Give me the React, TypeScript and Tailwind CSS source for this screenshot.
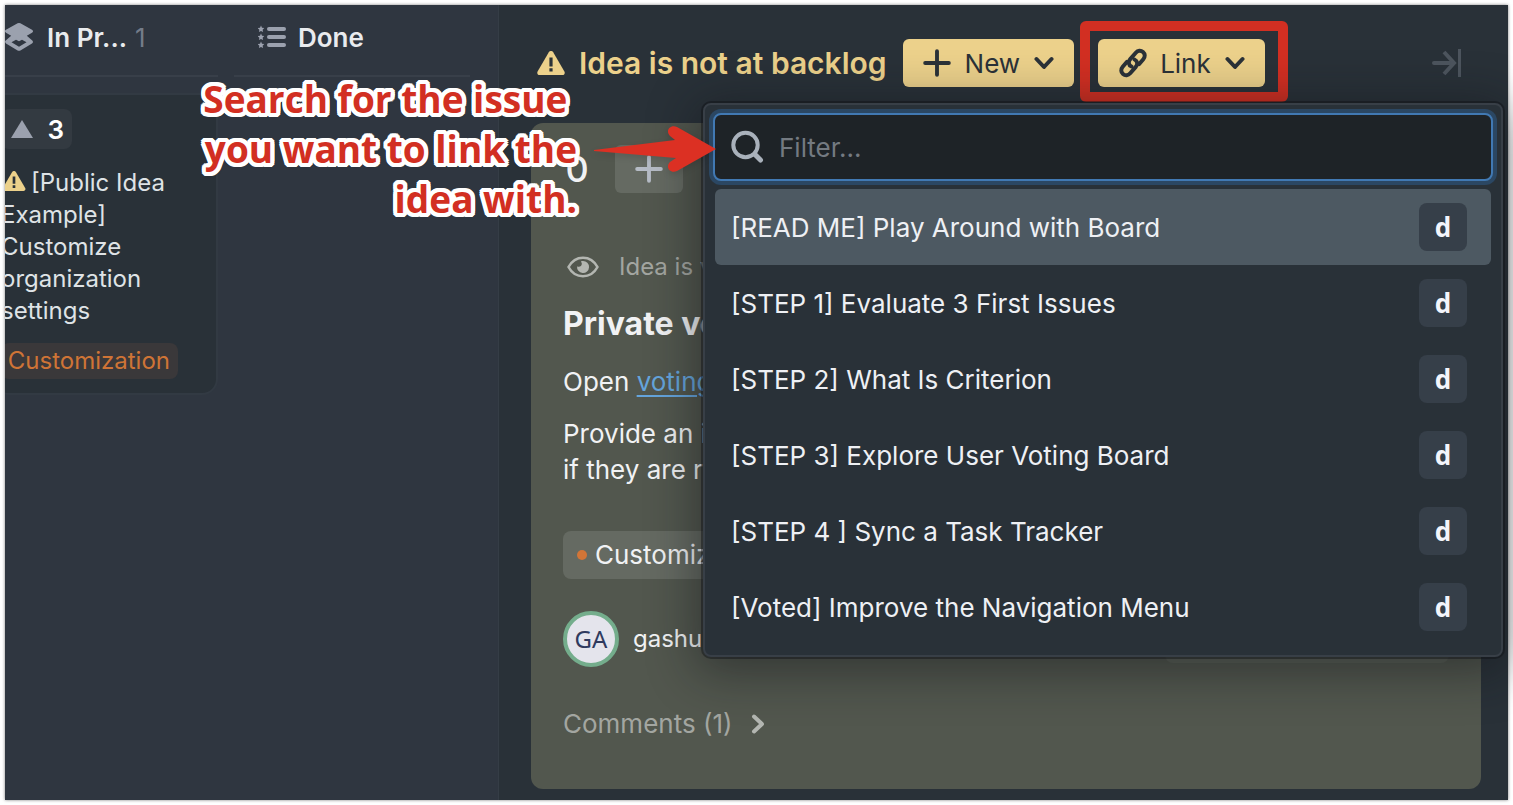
import { ReactNode } from "react";

const issues = [
  "[READ ME] Play Around with Board",
  "[STEP 1] Evaluate 3 First Issues",
  "[STEP 2] What Is Criterion",
  "[STEP 3] Explore User Voting Board",
  "[STEP 4 ] Sync a Task Tracker",
  "[Voted] Improve the Navigation Menu",
];

const WarningIcon = ({ className }: { className?: string }) => (
  <svg viewBox="0 0 28 24" className={className} aria-hidden="true">
    <path d="M11.8 1.2a2.6 2.6 0 0 1 4.4 0l11.2 19.2c.9 1.6-.1 3.6-2 3.6H2.6c-1.9 0-2.9-2-2-3.6z" fill="#ecd18b" />
    <path d="M12.4 6.6h3.2v8.8h-3.2zM12.4 17.2h3.2v3.2h-3.2z" fill="#2b3238" />
  </svg>
);

const LayersIcon = () => (
  <svg viewBox="0 0 30 30" className="size-[30px] shrink-0" fill="#9ba1ae" aria-hidden="true">
    <path d="M13.6 1.3a3 3 0 0 1 2.8 0l11.6 6.4c1.4.8 1.4 2.2 0 3l-5.200 3 5.200 4.500c1.300 1 1.300 2.400 0 3.200l-11.600 7c-.9.500-1.900.5-2.800 0L2 21.400c-1.300-.8-1.300-2.200 0-3.200l5.200-4.500-5.200-3c-1.400-.8-1.400-2.200 0-3z" />
    <path d="m7.500 20.200 4.500-2.400 3 1.500 3-1.500 4.500 2.400L15 24.800z" fill="#2f3640" />
  </svg>
);

const StarListIcon = () => (
  <svg viewBox="0 0 28 24" className="h-6 w-7 shrink-0" fill="#9ba1ae" aria-hidden="true">
    {[4, 12, 20].map((y) => (
      <g key={y}>
        <path d={`M3 ${y - 3.4}l1 2.200 2.300.3-1.700 1.600.5 2.400L3 ${y + 2}l-2.100 1.100.5-2.400-1.700-1.600L2 ${y - 1.2}z`} />
        <rect x="9" y={y - 2} width="19" height="4" rx="2" />
      </g>
    ))}
  </svg>
);

const PlusIcon = ({ className }: { className?: string }) => (
  <svg viewBox="0 0 26 26" className={className} stroke="currentColor" strokeLinecap="round" aria-hidden="true">
    <path d="M13 2v22M2 13h22" strokeWidth="3.600" />
  </svg>
);

const ChevronIcon = ({ className }: { className?: string }) => (
  <svg viewBox="0 0 20 14" className={className} fill="none" stroke="currentColor" strokeLinecap="round" strokeLinejoin="round" aria-hidden="true">
    <path d="m2.500 3 7.500 8 7.500-8" strokeWidth="4" />
  </svg>
);

const ChainIcon = () => (
  <svg viewBox="0 0 30 30" className="size-[30px]" fill="none" stroke="currentColor" strokeWidth="4" strokeLinecap="round" strokeLinejoin="round" aria-hidden="true">
    <path d="M13.500 18.500c-3-1.300-3.600-4.800-1.300-7.400l5.600-6.400c2-2.300 5-2.600 7.200-.7s2.300 4.900.3 7.200l-4.300 5" />
    <path d="M16.500 11.500c3 1.300 3.600 4.800 1.300 7.400l-5.600 6.400c-2 2.300-5 2.600-7.200.7s-2.300-4.900-.3-7.200l4.300-5" />
  </svg>
);

const CollapseIcon = () => (
  <svg viewBox="0 0 30 30" className="size-[30px]" fill="none" stroke="#4d555e" strokeWidth="4" aria-hidden="true">
    <path d="M2 15h19" strokeLinecap="round" />
    <path d="m12 4 10 11-10 11" />
    <path d="M27.500 1v28" strokeWidth="3" />
  </svg>
);

const EyeIcon = () => (
  <svg viewBox="0 0 32 22" className="h-[22px] w-8 shrink-0" aria-hidden="true">
    <path d="M1.500 11C4.600 5.300 10 1.700 16 1.700S27.400 5.300 30.500 11C27.400 16.700 22 20.300 16 20.300S4.600 16.700 1.500 11z" fill="none" stroke="#b3b6b1" strokeWidth="2.600" strokeLinejoin="round" />
    <path d="M16 5a6 6 0 1 1-5.900 5.200c1 .9 2.800.8 3.800-.2 1.200-1.200 1.300-3.200 0-4.600.7-.3 1.400-.4 2.100-.4z" fill="#b3b6b1" />
  </svg>
);

const SearchIcon = () => (
  <svg viewBox="0 0 34 34" className="size-[34px] shrink-0" fill="none" stroke="#a9b1bb" strokeLinecap="round" aria-hidden="true">
    <circle cx="14.500" cy="15" r="12.200" strokeWidth="4" />
    <path d="m24 24.500 5.500 5.500" strokeWidth="5" />
  </svg>
);

const YellowButton = ({ children }: { children: ReactNode }) => (
  <button className="flex h-12 items-center rounded-md bg-[#ecd18b] px-5 text-[26px] text-[#2b3238]">{children}</button>
);

const Board = () => (
  <section className="w-[494px] shrink-0 overflow-hidden border-r border-[#353d46] bg-[#2f3640]">
    <div className="-ml-3 flex gap-4">
      <div className="w-[225px] shrink-0">
        <header className="flex h-[72px] items-center border-b-2 border-[#383f49] pb-1.5 pl-[11px]">
          <LayersIcon />
          <h2 className="ml-[13px] text-[26px] font-semibold text-[#e9ebee]">In Pr...</h2>
          <span className="ml-2 text-[26px] text-[#747c89]">1</span>
        </header>
        <article className="mt-4 rounded-b-2xl border-2 border-[#323a43] bg-[#293138] pb-[14px] pl-1.5">
          <button className="mt-[14px] flex h-10 w-[71px] items-center justify-end gap-[14px] rounded-lg bg-[#333a41] pr-2 text-[26px] font-semibold text-white">
            <svg viewBox="0 0 22 18" className="h-[18px] w-[22px]" aria-hidden="true">
              <path d="M11 0l11 18H0z" fill="#9ba1ae" />
            </svg>
            3
          </button>
          <p className="mt-[18px] w-44 text-2xl text-[#dfe3e6]">
            <WarningIcon className="mr-1 inline h-5 w-[26px] align-baseline" />
            [Public Idea Example] Customize organization settings
          </p>
          <span className="mt-4 flex h-9 w-[177px] items-center justify-end rounded-lg bg-[#3a383a] pr-2 text-2xl text-[#cf7436]">Customization</span>
        </article>
      </div>
      <header className="flex h-[72px] w-[236px] items-center gap-3 border-b-2 border-[#383f49] pb-1.5 pl-6">
        <StarListIcon />
        <h2 className="text-[26px] font-semibold text-[#e9ebee]">Done</h2>
      </header>
    </div>
  </section>
);

const IdeaCard = () => (
  <article className="mr-[27px] ml-8 rounded-xl bg-[#52574e] px-8 pt-[22px] pb-[47px] text-[26px] leading-9 whitespace-nowrap text-[#f1f2f4]">
    <div className="flex h-12 items-center gap-6">
      <span className="w-7 text-center text-4xl font-medium">0</span>
      <button className="flex h-12 w-[68px] items-center justify-center rounded-md bg-[#656a62] text-[#b6bcc6]" aria-label="Vote">
        <PlusIcon className="size-7" />
      </button>
    </div>
    <div className="mt-14 flex items-center gap-5 pl-1 text-2xl leading-9 text-[#a3a6a1]">
      <EyeIcon />
      Idea is visible
    </div>
    <h1 className="mt-[21px] text-[32px] leading-9 font-bold">Private voting</h1>
    <p className="mt-[22px]">
      Open <a href="#voting" className="text-[#65a5dd] underline underline-offset-4">voting</a>
    </p>
    <p className="mt-4">
      Provide an idea
      <br />
      if they are ready
    </p>
    <div className="mt-[43px] flex h-12 w-60 items-center gap-2 rounded-lg bg-[#656a62] px-[14px]">
      <span className="size-[10px] rounded-full bg-[#d27537]" />
      Customization
    </div>
    <div className="mt-8 flex items-center gap-[14px] text-2xl">
      <span className="flex size-14 items-center justify-center rounded-full border-4 border-[#74ad8c] bg-[#e4e4ec] font-['Noto_Sans',sans-serif] text-[#2f3a5e]">GA</span>
      gashu
      <span className="ml-auto h-12 w-[284px] rounded-lg bg-[#5b6057]" />
    </div>
    <button className="mt-[39px] flex items-center gap-4 text-[#a3a6a1]">
      Comments (1)
      <ChevronIcon className="h-[14px] w-5 -rotate-90 text-[#b3b6b1]" />
    </button>
  </article>
);

const LinkMenu = () => (
  <div className="absolute top-[98px] right-[5px] left-[204px] rounded-lg border-2 border-[#383f47] bg-[#293138] p-2 pb-[10px] shadow-[0_0_0_2px_rgba(15,18,22,0.45),0_8px_48px_8px_rgba(15,18,22,0.45)]">
    <label className="flex h-[68px] items-center gap-[14px] rounded-lg border-2 border-[#4179b3] bg-[#1e2327] px-4 ring-4 ring-[#2b4763]">
      <SearchIcon />
      <input type="text" placeholder="Filter..." aria-label="Filter" className="min-w-0 flex-1 bg-transparent text-[26px] text-white outline-none placeholder:text-[#747a81]" />
    </label>
    <ul className="mx-0.5 mt-2">
      {issues.map((issue, i) => (
        <li key={issue}>
          <button className={`flex h-[76px] w-full items-center justify-between rounded-md pr-6 pl-4 text-[26px] text-[#eef0f4] ${i === 0 ? "bg-[#4d5962]" : ""}`}>
            {issue}
            <span className="flex size-12 items-center justify-center rounded-lg bg-[#363f49] font-['Noto_Sans',sans-serif] font-bold text-[#f4f5fb]">d</span>
          </button>
        </li>
      ))}
    </ul>
  </div>
);

const Annotation = () => (
  <>
    <p className="absolute top-[69px] left-[160px] w-[412px] text-right font-['Open_Sans',sans-serif] text-[37px] leading-[50px] font-bold text-[#d22f22] [text-shadow:4px_0_white,-4px_0_white,0_4px_white,0_-4px_white,3px_3px_white,-3px_3px_white,3px_-3px_white,-3px_-3px_white,4px_2px_white,-4px_2px_white,4px_-2px_white,-4px_-2px_white,2px_4px_white,-2px_4px_white,2px_-4px_white,-2px_-4px_white,2px_0_white,-2px_0_white,0_2px_4px_rgba(0,0,0,0.5)]">
      Search for the issue&nbsp;
      <br />
      you want to link the
      <br />
      idea with.
    </p>
    <svg viewBox="0 0 124 48" className="absolute top-[120px] left-[588px] h-12 w-[124px] drop-shadow-md" aria-hidden="true">
      <path d="M1 25 82 15 77 11c-5-5 0-12 7-9l39 22-39 22c-7 3-12-4-7-9l6-4L1 26z" fill="#dc3023" />
    </svg>
  </>
);

const App = () => {
  return (
    <div className="min-h-screen bg-white p-[5px] font-['Inter',sans-serif]">
      <main className="relative flex min-h-[795px] shadow-[0_0_3px_rgba(0,0,0,0.5)]">
        <Board />
        <section className="relative min-w-0 flex-1 bg-[#293138] pb-[11px]">
          <header className="flex h-[118px] items-center pr-[46px] pb-0.5 pl-[38px]">
            <WarningIcon className="h-6 w-7 shrink-0" />
            <h2 className="mr-4 ml-[14px] text-[30px] font-semibold whitespace-nowrap text-[#ecd18b]">Idea is not at backlog</h2>
            <YellowButton>
              <PlusIcon className="size-7" />
              <span className="mx-[14px]">New</span>
              <ChevronIcon className="h-[14px] w-5" />
            </YellowButton>
            <div className="relative ml-6">
              <YellowButton>
                <ChainIcon />
                <span className="mr-[14px] ml-3">Link</span>
                <ChevronIcon className="h-[14px] w-5" />
              </YellowButton>
              <span className="pointer-events-none absolute -top-[18px] -right-[23px] -bottom-[15px] -left-[18px] rounded-md border-10 border-[#d22f22]" />
            </div>
            <button className="ml-auto" aria-label="Collapse">
              <CollapseIcon />
            </button>
          </header>
          <IdeaCard />
          <LinkMenu />
        </section>
        <Annotation />
      </main>
    </div>
  );
};

export default App;
